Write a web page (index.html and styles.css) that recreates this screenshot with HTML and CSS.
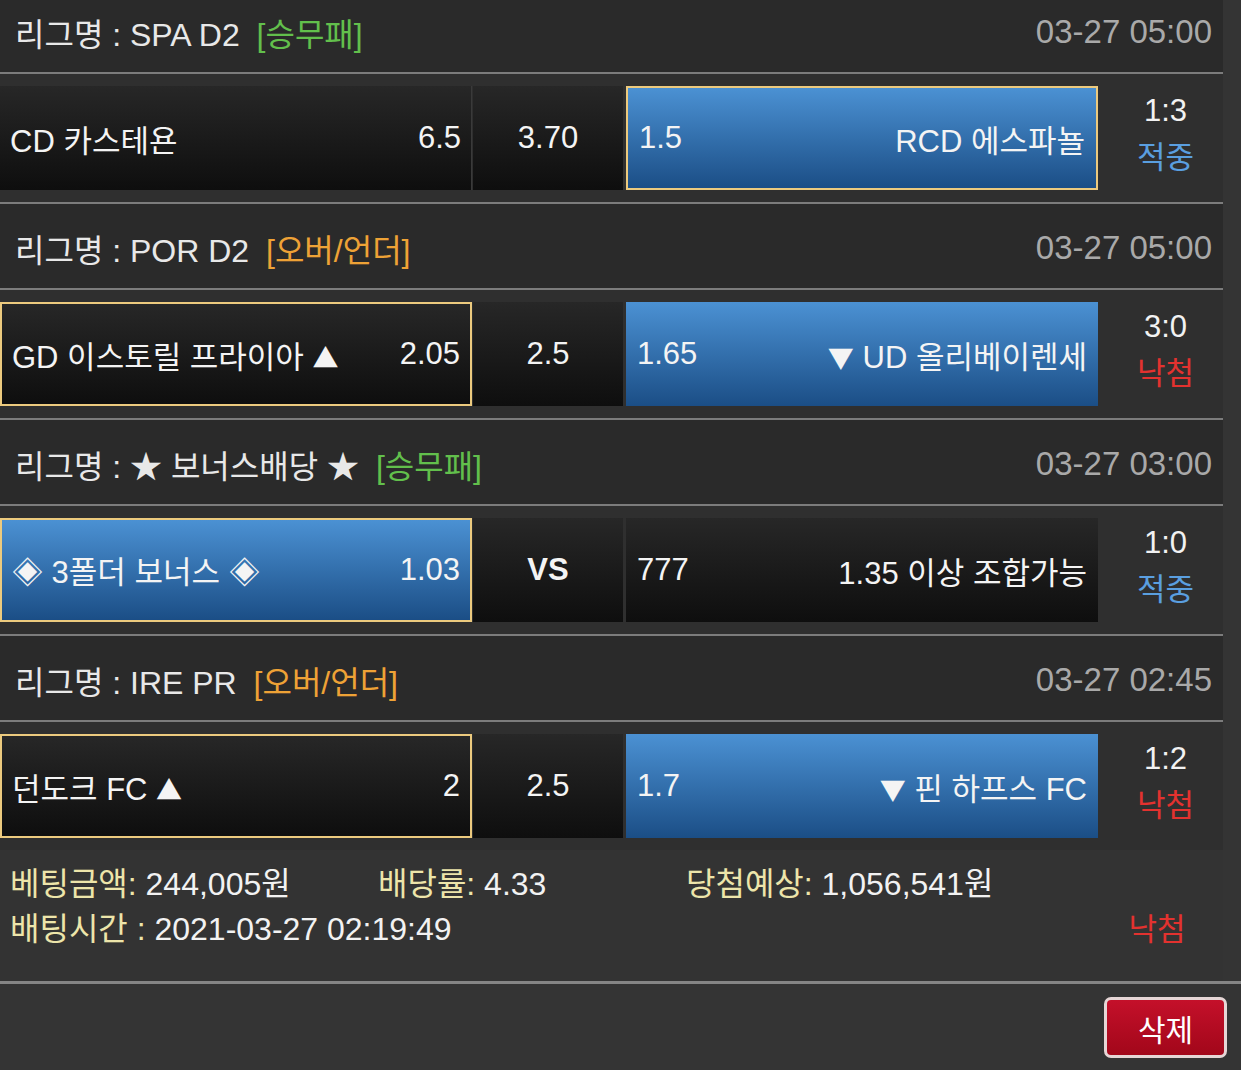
FILE: index.html
```html
<!DOCTYPE html>
<html lang="ko">
<head>
    <meta charset="UTF-8">
    <meta name="viewport" content="width=device-width, initial-scale=1.0">
    <title>배팅내역</title>
    <link rel="stylesheet" href="styles.css">
</head>
<body>
    <div class="bet-box">
        <div class="league-head">
            <div class="league-name">리그명 : SPA D2 <span class="tag tag-win">[승무패]</span></div>
            <div class="league-date">03-27 05:00</div>
        </div>
        <div class="game-row">
            <div class="cell cell-home">
                <span>CD 카스테욘</span>
                <span>6.5</span>
            </div>
            <div class="cell cell-draw">3.70</div>
            <div class="cell cell-away picked blue">
                <span>1.5</span>
                <span>RCD 에스파뇰</span>
            </div>
            <div class="result">
                <div>1:3</div>
                <div class="hit">적중</div>
            </div>
        </div>

        <div class="league-head">
            <div class="league-name">리그명 : POR D2 <span class="tag tag-ou">[오버/언더]</span></div>
            <div class="league-date">03-27 05:00</div>
        </div>
        <div class="game-row">
            <div class="cell cell-home picked">
                <span>GD 이스토릴 프라이아 <i class="arrow">▲</i></span>
                <span>2.05</span>
            </div>
            <div class="cell cell-draw">2.5</div>
            <div class="cell cell-away blue">
                <span>1.65</span>
                <span><i class="arrow">▼</i> UD 올리베이렌세</span>
            </div>
            <div class="result">
                <div>3:0</div>
                <div class="miss">낙첨</div>
            </div>
        </div>

        <div class="league-head">
            <div class="league-name">리그명 : ★ 보너스배당 ★ <span class="tag tag-win">[승무패]</span></div>
            <div class="league-date">03-27 03:00</div>
        </div>
        <div class="game-row">
            <div class="cell cell-home picked blue">
                <span>◈ 3폴더 보너스 ◈</span>
                <span>1.03</span>
            </div>
            <div class="cell cell-draw vs">VS</div>
            <div class="cell cell-away">
                <span>777</span>
                <span>1.35 이상 조합가능</span>
            </div>
            <div class="result">
                <div>1:0</div>
                <div class="hit">적중</div>
            </div>
        </div>

        <div class="league-head">
            <div class="league-name">리그명 : IRE PR <span class="tag tag-ou">[오버/언더]</span></div>
            <div class="league-date">03-27 02:45</div>
        </div>
        <div class="game-row last">
            <div class="cell cell-home picked">
                <span>던도크 FC <i class="arrow">▲</i></span>
                <span>2</span>
            </div>
            <div class="cell cell-draw">2.5</div>
            <div class="cell cell-away blue">
                <span>1.7</span>
                <span><i class="arrow">▼</i> 핀 하프스 FC</span>
            </div>
            <div class="result">
                <div>1:2</div>
                <div class="miss">낙첨</div>
            </div>
        </div>

        <div class="bet-summary">
            <div class="summary-line">
                <div class="col-amount"><span class="label">베팅금액:</span> 244,005원</div>
                <div class="col-rate"><span class="label">배당률:</span> 4.33</div>
                <div><span class="label">당첨예상:</span> 1,056,541원</div>
            </div>
            <div class="summary-line">
                <div class="col-time"><span class="label">배팅시간 :</span> 2021-03-27 02:19:49</div>
                <div class="summary-status miss">낙첨</div>
            </div>
        </div>
    </div>

    <div class="bet-actions">
        <button type="button" class="delete-btn">삭제</button>
    </div>
</body>
</html>
```

FILE: styles.css
```css
* {
    margin: 0;
    padding: 0;
    box-sizing: border-box;
}

body {
    font-family: "Liberation Sans", "Noto Sans CJK KR", sans-serif;
    font-size: 31px;
    color: #f2f2f2;
    background: #343434;
    overflow: hidden;
}

.bet-box {
    width: 1223px;
    margin-top: -12px;
}

/* 리그 헤더 */
.league-head {
    height: 86px;
    display: flex;
    align-items: center;
    justify-content: space-between;
    padding: 4px 11px 0 15px;
    background: #2a2a2a;
    border-bottom: 2px solid #7c7c7c;
    font-size: 32px;
}

.league-name {
    color: #e8e8e8;
}

.tag {
    margin-left: 8px;
}

.tag-win {
    color: #62bf4c;
}

.tag-ou {
    color: #eea236;
}

.league-date {
    color: #a9a9a9;
    font-size: 33px;
}

/* 경기 행 */
.game-row {
    display: flex;
    align-items: center;
    padding: 12px 0;
    background: #2f2f2f;
    border-bottom: 2px solid #7c7c7c;
}

.game-row.last {
    border-bottom: none;
}

.cell {
    height: 104px;
    display: flex;
    align-items: center;
    justify-content: space-between;
    padding: 0 10px;
    background: linear-gradient(#272727, #0e0e0e);
    color: #f4f4f4;
}

.cell-home {
    width: 472px;
    border-right: 1px solid #3a3a3a;
}

.cell-draw {
    width: 150px;
    margin-left: 1px;
    justify-content: center;
}

.cell-draw.vs {
    font-weight: bold;
}

.cell-away {
    width: 472px;
    margin-left: 3px;
    padding: 0 11px;
}

.cell.blue {
    background: linear-gradient(#4b91d3, #1b4e86);
}

.cell.picked {
    border: 2px solid #ecca7e;
}

.arrow {
    font-style: normal;
    font-family: "Noto Sans CJK KR", sans-serif;
    font-size: 26px;
}

.result {
    flex: 1;
    text-align: center;
    line-height: 47px;
    padding: 0 0 8px 10px;
}

.hit {
    color: #5a9fe0;
}

.miss {
    color: #e3322f;
}

/* 배팅 요약 */
.bet-summary {
    padding: 12px 0 29px 10px;
    line-height: 45px;
    font-size: 32px;
    background: #333333;
}

.summary-line {
    display: flex;
}

.col-amount {
    width: 368px;
}

.col-rate {
    width: 308px;
}

.col-time {
    width: 1088px;
}

.summary-status {
    width: 118px;
    text-align: center;
    font-size: 31px;
}

.label {
    color: #ede5aa;
}

.bet-actions {
    border-top: 3px solid #858585;
    display: flex;
    justify-content: flex-end;
    padding: 13px 14px 0 0;
}

.delete-btn {
    width: 123px;
    height: 61px;
    font-family: "Liberation Sans", "Noto Sans CJK KR", sans-serif;
    font-size: 30px;
    color: #fff;
    background: linear-gradient(#c4102a, #a2071a);
    border: 3px solid #e6d6d6;
    border-radius: 7px;
}
```
